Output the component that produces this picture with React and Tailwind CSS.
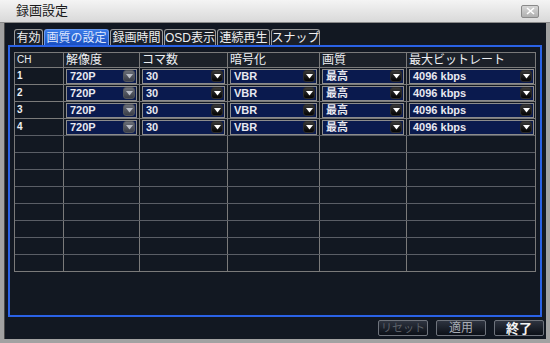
import React from "react";

const cols = [
  { w: "w-[48px]", label: "CH" },
  { w: "w-[76px]", label: "解像度" },
  { w: "w-[88px]", label: "コマ数" },
  { w: "w-[92px]", label: "暗号化" },
  { w: "w-[87px]", label: "画質" },
  { w: "w-[130px]", label: "最大ビットレート" },
];

const rows = [
  ["1", "720P", "30", "VBR", "最高", "4096 kbps"],
  ["2", "720P", "30", "VBR", "最高", "4096 kbps"],
  ["3", "720P", "30", "VBR", "最高", "4096 kbps"],
  ["4", "720P", "30", "VBR", "最高", "4096 kbps"],
];

const font = { fontFamily: '"Liberation Sans", "Noto Sans CJK JP", sans-serif' };

function Arrow({ disabled }) {
  return (
    <div
      className={
        "w-[12px] h-[12px] rounded-[3px] flex items-center justify-center shrink-0 border " +
        (disabled
          ? "bg-gradient-to-b from-[#6a6e78] to-[#3a3e48] border-[#50545c]"
          : "bg-gradient-to-b from-[#3a3a3a] to-[#050505] border-[#2a2a2a]")
      }
    >
      <svg width="7" height="5" viewBox="0 0 7 5">
        <polygon points="0,0 7,0 3.5,4.5" fill={disabled ? "#b8bcc6" : "#ffffff"} />
      </svg>
    </div>
  );
}

function Select({ value, disabled }) {
  return (
    <div className="mx-[2px] h-[15px] border border-[#8c8c8c] bg-[#0a1a4e] flex items-center justify-between pl-[3px] pr-[1px]">
      <span className="text-[11px] font-bold text-[#e8e8f0] leading-none">{value}</span>
      <Arrow disabled={disabled} />
    </div>
  );
}

function Tab({ label, active, w }) {
  return (
    <div
      className={
        w +
        " h-[16px] shrink-0 flex items-center justify-center border border-b-0 rounded-t-[3px] text-[12px] leading-none whitespace-nowrap " +
        (active
          ? "bg-gradient-to-b from-[#3a7ae8] to-[#1a4fc0] border-[#6a9af0] text-[#dfe8ff]"
          : "bg-[#1a1f28] border-[#9a9a9a] text-[#f0f0f0]")
      }
    >
      {label}
    </div>
  );
}

function Btn({ label, tone }) {
  return (
    <div
      className={
        "w-[50px] h-[16px] flex items-center justify-center border border-[#6e737c] rounded-[2px] bg-gradient-to-b from-[#2e3440] to-[#0c1018] leading-none whitespace-nowrap " +
        tone
      }
    >
      {label}
    </div>
  );
}

export default function App() {
  const emptyRows = Array.from({ length: 8 });
  return (
    <div className="w-[550px] h-[343px] bg-[#a2a2a2] flex flex-col overflow-hidden" style={font}>
      {/* title bar */}
      <div className="h-[23px] shrink-0 bg-gradient-to-b from-[#f4f4f4] to-[#d9d9d9] flex items-center justify-between pl-[16px] pr-[11px] border-b border-[#8a8a8a]">
        <span className="text-[13px] text-[#1a1a1a]">録画設定</span>
        <div className="w-[18px] h-[13px] border border-[#8a8a8a] rounded-[2px] bg-gradient-to-b from-[#d6d6d6] to-[#b0b0b0] flex items-center justify-center">
          <svg width="9" height="8" viewBox="0 0 9 8">
            <path d="M1 1 L8 7 M8 1 L1 7" stroke="#ffffff" strokeWidth="1.6" />
          </svg>
        </div>
      </div>
      {/* body */}
      <div className="flex-1 mx-[4px] mb-[4px] bg-[#121822] flex flex-col border-l border-[#4a4a4a]">
        {/* tabs */}
        <div className="flex items-end gap-[1px] pl-[9px] pt-[6px]">
          <Tab w="w-[29px]" label="有効" />
          <Tab w="w-[65px]" label="画質の設定" active />
          <Tab w="w-[53px]" label="録画時間" />
          <Tab w="w-[52px]" label="OSD表示" />
          <Tab w="w-[53px]" label="連続再生" />
          <Tab w="w-[49px]" label="スナップ" />
        </div>
        {/* panel */}
        <div className="ml-[3px] mr-[4px] h-[272px] border-2 border-[#2a62e6] pt-[5px] pl-[4px]">
          <div className="w-[522px] border border-[#7a7a7a]">
            <div className="flex h-[14px] bg-[#1c2129]">
              {cols.map((c, i) => (
                <div
                  key={i}
                  className={
                    c.w +
                    " shrink-0 flex items-center pl-[2px] text-[#eef0f4] leading-none " +
                    (i === 0 ? "text-[10px]" : "text-[12px] border-l border-[#7a7a7a]")
                  }
                >
                  {c.label}
                </div>
              ))}
            </div>
            {rows.map((r, ri) => (
              <div key={ri} className="flex h-[17px] border-t border-[#7a7a7a]">
                {r.map((v, ci) => (
                  <div
                    key={ci}
                    className={
                      cols[ci].w +
                      " shrink-0 flex flex-col justify-center " +
                      (ci === 0 ? "" : "border-l border-[#7a7a7a]")
                    }
                  >
                    {ci === 0 ? (
                      <span className="pl-[2px] text-[10px] font-bold text-[#eef0f4] leading-none">{v}</span>
                    ) : (
                      <Select value={v} disabled={ci === 1} />
                    )}
                  </div>
                ))}
              </div>
            ))}
            {emptyRows.map((_, ri) => (
              <div key={ri} className="flex h-[17px] border-t border-[#5a5e66]">
                {cols.map((c, ci) => (
                  <div
                    key={ci}
                    className={c.w + " shrink-0 " + (ci === 0 ? "" : "border-l border-[#7a7a7a]")}
                  />
                ))}
              </div>
            ))}
          </div>
        </div>
        {/* buttons */}
        <div className="flex justify-end gap-[8px] pr-[2px] pt-[3px]">
          <Btn label="リセット" tone="text-[11px] text-[#5c6068]" />
          <Btn label="適用" tone="text-[12px] text-[#a8acb4]" />
          <Btn label="終了" tone="text-[13px] text-[#f4f4f4] font-bold" />
        </div>
      </div>
    </div>
  );
}
